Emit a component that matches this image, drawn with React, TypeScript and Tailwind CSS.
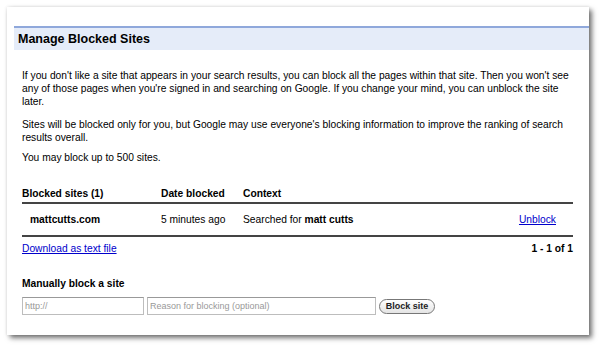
import React from "react";

export default function App() {
  const font = { fontFamily: '"Liberation Sans", Arial, sans-serif' };
  return (
    <div className="w-[600px] h-[346px] bg-white pt-[7px] pl-[7px]" style={font}>
      <div className="w-[582px] h-[328px] bg-white shadow-[3px_3px_5px_rgba(0,0,0,0.55),0_0_3px_rgba(0,0,0,0.12)] pt-[19px]">
        <div className="ml-[7px] h-[24px] border-t-2 border-[#8fa8db] bg-[#e5ecf9] pl-[4px] flex items-center">
          <h1 className="text-[12.5px] font-bold text-black leading-none">Manage Blocked Sites</h1>
        </div>
        <div className="px-[15px] pt-[19px] text-[10.25px] leading-[13px] text-black">
          <p>
            If you don't like a site that appears in your search results, you can block all the pages within that site. Then you won't see any of those pages when you're signed in and searching on Google. If you change your mind, you can unblock the site later.
          </p>
          <p className="mt-[10px]">
            Sites will be blocked only for you, but Google may use everyone's blocking information to improve the ranking of search results overall.
          </p>
          <p className="mt-[7px]">You may block up to 500 sites.</p>

          <div className="mt-[21px] w-[551px]">
            <div className="flex font-bold h-[19px] items-center border-b-2 border-[#444]">
              <div className="w-[139px]">Blocked sites <span>(1)</span></div>
              <div className="w-[82px]">Date blocked</div>
              <div className="flex-1">Context</div>
            </div>
            <div className="flex h-[33px] items-center border-b-2 border-[#444]">
              <div className="w-[139px] pl-[8px] font-bold">mattcutts.com</div>
              <div className="w-[82px]">5 minutes ago</div>
              <div className="flex-1">
                Searched for <span className="font-bold">matt cutts</span>
              </div>
              <a className="text-[#0000cc] underline mr-[17px]" href="#">Unblock</a>
            </div>
            <div className="flex justify-between items-center h-[22px]">
              <a className="text-[#0000cc] underline" href="#">Download as text file</a>
              <span className="font-bold">1 - 1 of 1</span>
            </div>
          </div>

          <div className="mt-[18px] font-bold">Manually block a site</div>
          <div className="mt-[7px] flex items-center gap-[3px]">
            <input
              className="w-[122px] h-[18px] border border-[#bdbdbd] border-t-[#999] px-[2px] text-[9px] placeholder:text-[#999] outline-none"
              placeholder="http://"
              style={font}
            />
            <input
              className="w-[229px] h-[18px] border border-[#bdbdbd] border-t-[#999] px-[2px] text-[9px] placeholder:text-[#999] outline-none"
              placeholder="Reason for blocking (optional)"
              style={font}
            />
            <button
              className="w-[56px] h-[15px] rounded-full border border-[#777] bg-gradient-to-b from-white to-[#e4e4e4] text-[9px] font-bold text-[#222] leading-none"
              style={font}
            >
              Block site
            </button>
          </div>
        </div>
      </div>
    </div>
  );
}
